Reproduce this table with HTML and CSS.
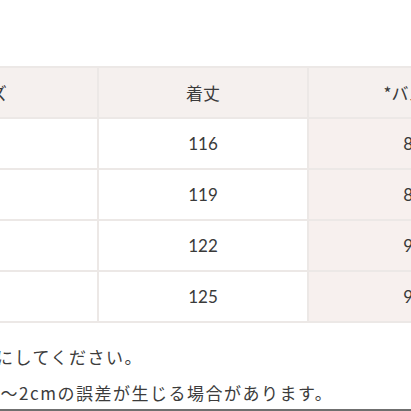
FILE: index.html
```html
<!DOCTYPE html>
<html lang="ja">
<head>
<meta charset="utf-8">
<link rel="stylesheet" href="styles.css">
</head>
<body>
<div class="page">
  <table class="size-table">
    <colgroup>
      <col class="w1">
      <col class="w2">
      <col class="w3">
    </colgroup>
    <thead>
      <tr>
        <th>サイズ</th>
        <th>着丈</th>
        <th class="c3">*バスト</th>
      </tr>
    </thead>
    <tbody>
      <tr><td>110</td><td>116</td><td class="c3">84</td></tr>
      <tr><td>120</td><td>119</td><td class="c3">88</td></tr>
      <tr><td>130</td><td>122</td><td class="c3">92</td></tr>
      <tr><td>140</td><td>125</td><td class="c3">96</td></tr>
    </tbody>
  </table>
  <div class="notes">
    <p class="note">※目安を参考にしてください。</p>
    <p class="note note-shift">※採寸により1～2cmの誤差が生じる場合があります。</p>
  </div>
</div>
</body>
</html>
```
FILE: styles.css
```css
html, body {
  margin: 0;
  padding: 0;
  background: #ffffff;
}
body {
  width: 411px;
  height: 411px;
  overflow: hidden;
  font-family: "Lato", "Noto Sans CJK JP", sans-serif;
  color: #3a3a3a;
}
.page {
  box-sizing: border-box;
  height: 411px;
  padding-top: 66px;
  border-bottom: 2px solid #6f6f6f;
  overflow: hidden;
}
.size-table {
  border-collapse: collapse;
  margin-left: -136px;
  width: 653px;
  table-layout: fixed;
}
.w1 { width: 233px; }
.w2 { width: 210px; }
.w3 { width: 210px; }
.size-table th,
.size-table td {
  border: 2px solid #ece8e6;
  height: 49px;
  padding: 0;
  text-align: center;
  vertical-align: middle;
  font-size: 17px;
  font-weight: 400;
}
.size-table th {
  font-family: "Noto Sans CJK JP", sans-serif;
  background: #f5f0ee;
}
.size-table td.c3 {
  background: #f7f0ee;
}
.notes {
  margin-top: 16px;
  margin-left: -115px;
  font-family: "Noto Sans CJK JP", sans-serif;
  font-size: 17px;
  letter-spacing: 1.5px;
  color: #3c3c3c;
  white-space: nowrap;
}
.note {
  margin: 0;
  line-height: 36px;
}
.note-shift {
  text-indent: -6px;
}
```
